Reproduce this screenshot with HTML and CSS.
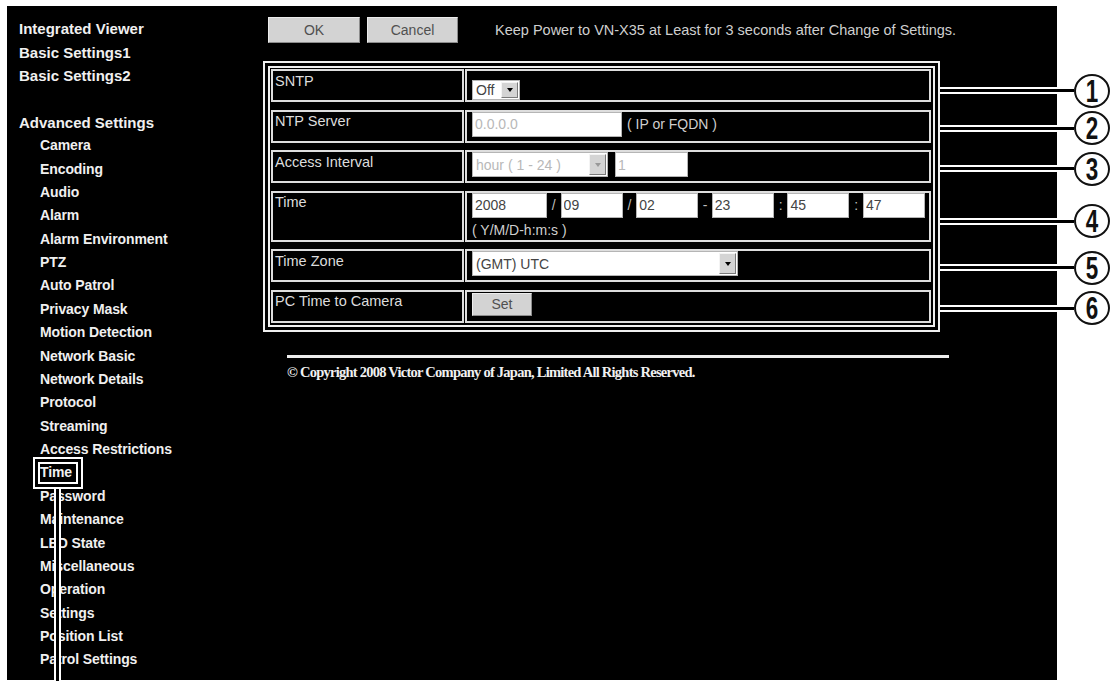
FILE: index.html
```html
<!DOCTYPE html>
<html lang="en">
<head>
  <meta charset="UTF-8" />
  <title>VN-X35 — Time Settings</title>
  <meta name="viewport" content="width=device-width, initial-scale=1.0" />

  <link rel="stylesheet" href="styles.css">
</head>

<body>
  <div class="screen">
    <nav class="sidebar">
      <a class="menu-top">Integrated Viewer</a>
      <a class="menu-top">Basic Settings1</a>
      <a class="menu-top">Basic Settings2</a>
      <div class="menu-gap"></div>
      <div class="menu-top">Advanced Settings</div>
      <a class="menu-sub">Camera</a>
      <a class="menu-sub">Encoding</a>
      <a class="menu-sub">Audio</a>
      <a class="menu-sub">Alarm</a>
      <a class="menu-sub">Alarm Environment</a>
      <a class="menu-sub">PTZ</a>
      <a class="menu-sub">Auto Patrol</a>
      <a class="menu-sub">Privacy Mask</a>
      <a class="menu-sub">Motion Detection</a>
      <a class="menu-sub">Network Basic</a>
      <a class="menu-sub">Network Details</a>
      <a class="menu-sub">Protocol</a>
      <a class="menu-sub">Streaming</a>
      <a class="menu-sub">Access Restrictions</a>
      <a class="menu-sub current">Time</a>
      <a class="menu-sub">Password</a>
      <a class="menu-sub">Maintenance</a>
      <a class="menu-sub">LED State</a>
      <a class="menu-sub">Miscellaneous</a>
      <a class="menu-sub">Operation</a>
      <a class="menu-sub">Settings</a>
      <a class="menu-sub">Position List</a>
      <a class="menu-sub">Patrol Settings</a>
    </nav>

    <main class="content">
      <div class="toolbar">
        <button class="btn btn-ok">OK</button>
        <button class="btn btn-cancel">Cancel</button>
        <span class="notice">Keep Power to VN-X35 at Least for 3 seconds after Change of Settings.</span>
      </div>

      <div class="settings">
        <div class="row">
          <div class="label">SNTP</div>
          <div class="value">
            <div class="select select-sntp"><span>Off</span><i class="arrow"></i></div>
          </div>
          <span class="callout low"><span class="num">1</span></span>
        </div>

        <div class="row">
          <div class="label">NTP Server</div>
          <div class="value">
            <input class="field field-ntp" type="text" value="0.0.0.0" disabled>
            <span class="unit">( IP or FQDN )</span>
          </div>
          <span class="callout"><span class="num">2</span></span>
        </div>

        <div class="row">
          <div class="label">Access Interval</div>
          <div class="value">
            <div class="select select-interval disabled"><span>hour ( 1 - 24 )</span><i class="arrow"></i></div>
            <input class="field field-interval" type="text" value="1" disabled>
          </div>
          <span class="callout"><span class="num">3</span></span>
        </div>

        <div class="row tall">
          <div class="label">Time</div>
          <div class="value stacked">
            <div class="time-fields">
              <input class="field time-field year" type="text" value="2008">
              <span class="sep">/</span>
              <input class="field time-field" type="text" value="09">
              <span class="sep">/</span>
              <input class="field time-field" type="text" value="02">
              <span class="sep">-</span>
              <input class="field time-field" type="text" value="23">
              <span class="sep">:</span>
              <input class="field time-field" type="text" value="45">
              <span class="sep">:</span>
              <input class="field time-field" type="text" value="47">
            </div>
            <div class="hint">( Y/M/D-h:m:s )</div>
          </div>
          <span class="callout low"><span class="num">4</span></span>
        </div>

        <div class="row">
          <div class="label">Time Zone</div>
          <div class="value">
            <div class="select select-zone"><span>(GMT) UTC</span><i class="arrow"></i></div>
          </div>
          <span class="callout"><span class="num">5</span></span>
        </div>

        <div class="row">
          <div class="label">PC Time to Camera</div>
          <div class="value">
            <button class="btn btn-set">Set</button>
          </div>
          <span class="callout"><span class="num">6</span></span>
        </div>
      </div>

      <hr class="rule">
      <p class="copyright">&copy; Copyright 2008 Victor Company of Japan, Limited All Rights Reserved.</p>
    </main>
  </div>
</body>
</html>
```

FILE: styles.css
```css
*,
*::before,
*::after {
  box-sizing: border-box;
}

html,
body {
  margin: 0;
}

body {
  background: #fff;
  font-family: "Liberation Sans", Arial, sans-serif;
  height: 681px;
  overflow: hidden;
}

.screen {
  display: flex;
  width: 1050px;
  height: 674px;
  margin: 6px 0 0 7px;
  background: #000;
}

/* left menu */

.sidebar {
  width: 256px;
  flex: none;
  padding: 11.3px 0 0 12px;
  line-height: 23.37px;
  color: #f0f0f0;
  font-weight: bold;
}

.menu-top {
  display: block;
  font-size: 15px;
}

.menu-gap {
  height: 23.37px;
}

.menu-sub {
  display: block;
  margin-left: 21px;
  font-size: 14px;
  letter-spacing: -0.1px;
}

.menu-sub.current {
  position: relative;
}

/* annotation box round the current page */
.menu-sub.current::before {
  content: "";
  position: absolute;
  left: -7px;
  top: -4px;
  width: 50px;
  height: 32px;
  border: 2px solid #fff;
  box-shadow: inset 0 0 0 3px #000, inset 0 0 0 5px #fff;
}

.menu-sub.current::after {
  content: "";
  position: absolute;
  left: 13.5px;
  top: 28px;
  width: 7px;
  height: 200px;
  background: #000;
  border-left: 2px solid #fff;
  border-right: 2px solid #fff;
}

/* main area */

.content {
  flex: 1;
  padding-top: 11px;
}

.toolbar {
  display: flex;
  align-items: center;
  gap: 7px;
  height: 26px;
  padding-left: 5px;
}

.btn {
  height: 26px;
  padding: 0;
  background: #d3d3d3;
  border: 1px solid;
  border-color: #ececec #8c8c8c #8c8c8c #ececec;
  color: #505050;
  font: 14px "Liberation Sans", Arial, sans-serif;
}

.btn-ok {
  width: 92px;
}

.btn-cancel {
  width: 91px;
}

.notice {
  margin-left: 30px;
  color: #cfcfcf;
  font-size: 14.5px;
}

.settings {
  width: 677px;
  margin-top: 18px;
  padding: 6px 7px 7px 6px;
  border: 2px solid #f0f0f0;
  box-shadow: inset 0 0 0 3px #000, inset 0 0 0 5px #f0f0f0;
  display: flex;
  flex-direction: column;
  gap: 7.5px;
}

.row {
  position: relative;
  display: grid;
  grid-template-columns: 193px 1fr;
  gap: 1px;
  height: 33px;
}

.row.tall {
  height: 51px;
}

.label,
.value {
  border: 2px solid #dedede;
}

.label {
  padding: 1.5px 0 0 2px;
  color: #dcdcdc;
  font-size: 14.5px;
  line-height: 17px;
}

.value {
  display: flex;
  align-items: flex-start;
  padding-left: 5px;
}

.value.stacked {
  flex-direction: column;
}

.field {
  height: 25px;
  padding: 0 2px;
  background: #fff;
  border: 1px solid #b5b5b5;
  color: #444;
  font: 14px "Liberation Sans", Arial, sans-serif;
}

.field:disabled {
  color: #b8b8b8;
  background: #fff;
}

.field-ntp {
  width: 150px;
}

.field-interval {
  width: 73px;
  margin-left: 7px;
}

.unit {
  margin-left: 5px;
  padding-top: 4px;
  color: #cfcfcf;
  font-size: 14px;
}

.select {
  display: flex;
  align-items: center;
  height: 25px;
  padding: 1px 1px 1px 3px;
  background: #fff;
  border: 1px solid #b5b5b5;
  color: #444;
  font-size: 14px;
}

.select .arrow {
  align-self: stretch;
  width: 17px;
  margin-left: auto;
  background: #d4d4d4;
  border: 1px solid;
  border-color: #f4f4f4 #7a7a7a #7a7a7a #f4f4f4;
  display: flex;
  align-items: center;
  justify-content: center;
}

.select .arrow::before {
  content: "";
  border-left: 3.5px solid transparent;
  border-right: 3.5px solid transparent;
  border-top: 4px solid #000;
}

.select.disabled {
  color: #b8b8b8;
}

.select.disabled .arrow::before {
  border-top-color: #999;
}

.select-sntp {
  width: 48px;
  height: 20px;
  margin-top: 9px;
}

.select-interval {
  width: 136px;
}

.select-zone {
  width: 266px;
}

.time-fields {
  display: flex;
}

.time-field {
  width: 62px;
}

.time-field.year {
  width: 75px;
}

.sep {
  width: 13.6px;
  text-align: center;
  line-height: 25px;
  color: #bdbdbd;
  font-size: 14px;
}

.hint {
  margin-top: 4px;
  color: #cfcfcf;
  font-size: 14px;
  line-height: 17px;
}

.btn-set {
  width: 60px;
  height: 23px;
  margin-top: 1px;
}

/* numbered callouts to the right of the frame */

.callout {
  position: absolute;
  left: calc(100% + 143px);
  top: calc(50% - 15px);
  width: 36px;
  height: 34px;
  border: 2px solid #111;
  border-radius: 50%;
  background: #fff;
  display: flex;
  align-items: center;
  justify-content: center;
  color: #111;
  font: bold 32px "Liberation Sans", Arial, sans-serif;
  line-height: 1;
}

.callout.low {
  top: calc(50% - 12px);
}

.callout::before {
  content: "";
  position: absolute;
  right: calc(100% + 2px);
  top: calc(50% - 3.5px);
  width: 134px;
  height: 7px;
  background: #000;
  border-top: 2px solid #fff;
  border-bottom: 2px solid #fff;
}

.callout .num {
  display: inline-block;
  transform: scaleX(0.7);
}

/* footer */

.rule {
  width: 662px;
  height: 3px;
  margin: 23.5px 0 0 24px;
  border: 0;
  background: #eee;
}

.copyright {
  margin: 6px 0 0 24px;
  color: #f0f0f0;
  font: bold 14.5px "Liberation Serif", "Times New Roman", serif;
  letter-spacing: -0.75px;
  line-height: 17px;
}
```
